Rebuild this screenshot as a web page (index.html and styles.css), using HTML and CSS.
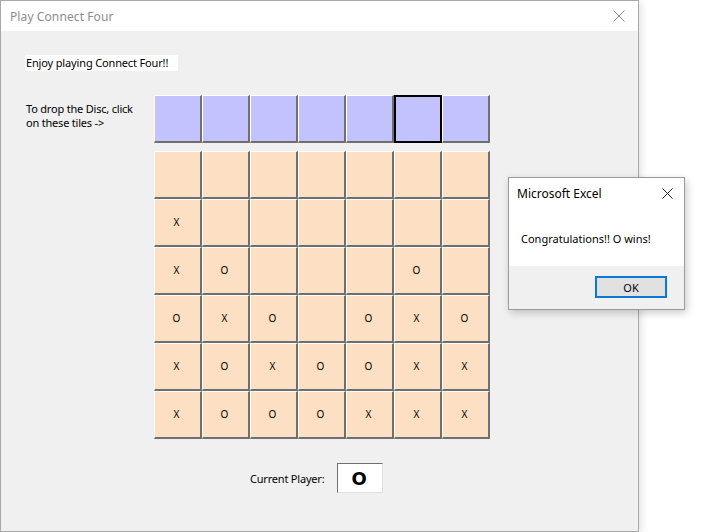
FILE: index.html
```html
<!DOCTYPE html>
<html>
<head>
<meta charset="utf-8">
<link rel="stylesheet" href="styles.css">
</head>
<body>
<div class="window">
  <div class="titlebar">
    <span class="title">Play Connect Four</span>
    <svg class="close" width="12" height="12" viewBox="0 0 12 12"><path d="M0.5 0.5L11.5 11.5M11.5 0.5L0.5 11.5" stroke="#8a8a8a" stroke-width="1"/></svg>
  </div>
  <div class="content">
    <div class="intro">Enjoy playing Connect Four!!</div>
    <div class="droprow">
      <div class="hint">To drop the Disc, click<br>on these tiles -&gt;</div>
      <div class="tiles">
        <div class="tile"></div><div class="tile"></div><div class="tile"></div><div class="tile"></div><div class="tile"></div><div class="tile selected"></div><div class="tile"></div>
      </div>
    </div>
    <div class="board">
      <div class="cell"></div><div class="cell"></div><div class="cell"></div><div class="cell"></div><div class="cell"></div><div class="cell"></div><div class="cell"></div>
      <div class="cell">X</div><div class="cell"></div><div class="cell"></div><div class="cell"></div><div class="cell"></div><div class="cell"></div><div class="cell"></div>
      <div class="cell">X</div><div class="cell">O</div><div class="cell"></div><div class="cell"></div><div class="cell"></div><div class="cell">O</div><div class="cell"></div>
      <div class="cell">O</div><div class="cell">X</div><div class="cell">O</div><div class="cell"></div><div class="cell">O</div><div class="cell">X</div><div class="cell">O</div>
      <div class="cell">X</div><div class="cell">O</div><div class="cell">X</div><div class="cell">O</div><div class="cell">O</div><div class="cell">X</div><div class="cell">X</div>
      <div class="cell">X</div><div class="cell">O</div><div class="cell">O</div><div class="cell">O</div><div class="cell">X</div><div class="cell">X</div><div class="cell">X</div>
    </div>
    <div class="player">
      <span class="plabel">Current Player:</span>
      <div class="pbox">O</div>
    </div>
  </div>
</div>

<div class="msgbox">
  <div class="msgtop">
    <div class="msgtitle">
      <span>Microsoft Excel</span>
      <svg class="mclose" width="11" height="11" viewBox="0 0 11 11"><path d="M0.5 0.5L10.5 10.5M10.5 0.5L0.5 10.5" stroke="#222" stroke-width="1"/></svg>
    </div>
    <div class="msgtext">Congratulations!! O wins!</div>
  </div>
  <div class="msgfoot">
    <div class="okbtn">OK</div>
  </div>
</div>
</body>
</html>
```

FILE: styles.css
```css
html, body {
  margin: 0;
  padding: 0;
  background: #ffffff;
  font-family: "Noto Sans", "Open Sans", sans-serif;
}

.window {
  width: 637px;
  height: 530px;
  border: 1px solid #a8a8a8;
  background: #f0f0f0;
  box-shadow: 2px 2px 8px rgba(0,0,0,0.12);
  display: flex;
  flex-direction: column;
}

.titlebar {
  height: 30px;
  background: #ffffff;
  display: flex;
  align-items: center;
  justify-content: space-between;
  padding: 0 10px 0 9px;
  flex-shrink: 0;
}

.title {
  font-size: 12px;
  color: #8c8c8c;
  letter-spacing: 0.1px;
}

.close {
  margin-right: 3px;
  margin-top: -1px;
}

.content {
  padding: 24px 0 0 24px;
  display: flex;
  flex-direction: column;
}

.intro {
  align-self: flex-start;
  background: #ffffff;
  font-size: 11px;
  letter-spacing: -0.15px;
  color: #000;
  height: 16px;
  line-height: 16px;
  width: 152px;
  padding-left: 1px;
}

.droprow {
  display: flex;
  margin-top: 24px;
}

.hint {
  width: 128px;
  padding: 7px 0 0 1px;
  font-size: 11px;
  letter-spacing: -0.2px;
  line-height: 14px;
  color: #000;
  white-space: nowrap;
}

.tiles {
  display: grid;
  grid-template-columns: repeat(7, 48px);
  height: 48px;
}

.tile {
  background: #c2c2fe;
  border-top: 1px solid #ffffff;
  border-left: 1px solid #ffffff;
  border-right: 2px solid #6f6f6f;
  border-bottom: 2px solid #6f6f6f;
  box-sizing: border-box;
}

.tile.selected {
  border: 2px solid #000000;
}

.board {
  margin-top: 8px;
  margin-left: 129px;
  display: grid;
  grid-template-columns: repeat(7, 48px);
  grid-auto-rows: 48px;
  width: 336px;
}

.cell {
  background: #fde0c3;
  border-top: 1px solid #ffffff;
  border-left: 1px solid #ffffff;
  border-right: 2px solid #6f6f6f;
  border-bottom: 2px solid #6f6f6f;
  box-sizing: border-box;
  display: flex;
  align-items: center;
  justify-content: center;
  font-size: 10px;
  color: #000;
  padding: 0 2px 1px 0;
}

.player {
  display: flex;
  align-items: center;
  margin-top: 24px;
  margin-left: 225px;
}

.plabel {
  font-size: 11px;
  letter-spacing: -0.2px;
  color: #000;
  margin-right: 13px;
}

.pbox {
  width: 46px;
  height: 30px;
  box-sizing: border-box;
  background: #ffffff;
  border-top: 1px solid #6e6e6e;
  border-left: 1px solid #6e6e6e;
  border-right: 1px solid #e0e0e0;
  border-bottom: 1px solid #e0e0e0;
  font-family: "DejaVu Sans", sans-serif;
  font-weight: bold;
  font-size: 18px;
  padding-left: 13px;
  line-height: 30px;
  color: #000;
}

.msgbox {
  position: absolute;
  left: 508px;
  top: 177px;
  width: 175px;
  height: 131px;
  border: 1px solid #9a9a9a;
  background: #f0f0f0;
  box-shadow: 2px 3px 8px rgba(0,0,0,0.2);
  display: flex;
  flex-direction: column;
  font-family: "Noto Sans", "Open Sans", sans-serif;
}

.msgtop {
  background: #ffffff;
  height: 88px;
  display: flex;
  flex-direction: column;
}

.msgtitle {
  display: flex;
  justify-content: space-between;
  align-items: center;
  height: 30px;
  padding: 0 11px 0 8px;
  font-size: 12px;
  color: #000;
}

.msgtext {
  font-size: 11px;
  color: #000;
  padding: 23px 0 0 12px;
}

.msgfoot {
  flex: 1;
  display: flex;
  justify-content: flex-end;
  align-items: flex-start;
  padding: 10px 17px 0 0;
}

.okbtn {
  width: 72px;
  height: 22px;
  box-sizing: border-box;
  border: 2px solid #0a78d4;
  background: #e1e1e1;
  font-size: 11px;
  display: flex;
  align-items: center;
  justify-content: center;
  color: #000;
}
```
